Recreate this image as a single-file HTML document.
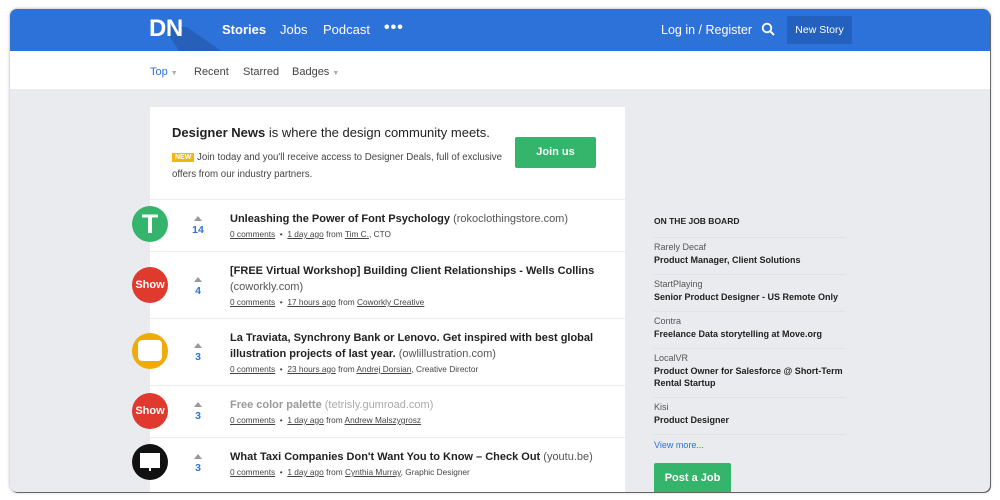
<!DOCTYPE html>
<html><head><meta charset="utf-8"><style>
*{margin:0;padding:0;box-sizing:border-box}
body{width:1000px;height:500px;background:#fff;font-family:"Liberation Sans",Arial,sans-serif;position:relative;overflow:hidden}
.win{position:absolute;left:10px;top:9px;width:980px;height:483px;border-radius:7px;overflow:hidden;background:#e9ebee;box-shadow:1px 1px 0 #666,0 0 3px rgba(0,0,0,.35)}
.hdr{position:absolute;left:0;top:0;width:980px;height:42px;background:#2d72d9}
.logo{position:absolute;left:139px;top:6px;color:#fff;font-weight:bold;font-size:24px;letter-spacing:-0.5px;z-index:2}
.nav{position:absolute;top:13px;color:#fff;font-size:13px}
.sub{position:absolute;left:0;top:42px;width:980px;height:38px;background:#fff}
.sub span{position:absolute;top:15px;font-size:11px;color:#444}
.card{position:absolute;left:140px;top:98px;width:475px;height:400px;background:#fff}
.row{position:absolute;left:0;width:475px;border-top:1px solid #ececec}
.av{position:absolute;left:-18px;width:36px;height:36px;border-radius:50%;color:#fff;font-weight:bold;font-size:11px;text-align:center;line-height:36px}
.vote{position:absolute;left:38px;width:20px;text-align:center;color:#2d72d9;font-weight:bold;font-size:10.5px}
.vote:before{content:"";display:block;margin:0 auto 3px;width:0;height:0;border-left:4px solid transparent;border-right:4px solid transparent;border-bottom:5px solid #999}
.t{position:absolute;left:80px;width:385px;font-size:11px;font-weight:bold;color:#222;line-height:16px}
.t i{font-style:normal;font-weight:normal;color:#555}
.m{font-size:8.3px;color:#444;font-weight:normal;line-height:14px}
.m u{color:#444}
.job{position:absolute;left:644px;width:192px;font-size:9px;color:#555;border-top:1px solid #e0e2e5;padding-top:4px}
.job b{display:block;color:#222;font-size:9px;margin-top:2px;line-height:12px}
</style></head><body>
<div class="win">
 <div class="hdr">
  <svg style="position:absolute;left:139px;top:0" width="80" height="42"><polygon points="15,18 38,18 72,42 30,42" fill="#2660b8"/></svg>
  <div class="logo">DN</div>
  <div class="nav" style="left:212px;font-weight:bold">Stories</div>
  <div class="nav" style="left:270px">Jobs</div>
  <div class="nav" style="left:313px">Podcast</div>
  <div class="nav" style="left:374px;top:10px;font-size:16px;letter-spacing:1px;font-weight:bold">•••</div>
  <div class="nav" style="left:651px;font-size:12.5px;top:14px">Log in / Register</div>
  <svg style="position:absolute;left:751px;top:13px" width="15" height="15"><circle cx="6" cy="6" r="4.3" stroke="#fff" stroke-width="1.8" fill="none"/><line x1="9.2" y1="9.2" x2="13" y2="13" stroke="#fff" stroke-width="2"/></svg>
  <div style="position:absolute;left:777px;top:7px;width:65px;height:28px;background:#2460bd;color:#fff;font-size:10.5px;text-align:center;line-height:28px">New Story</div>
 </div>
 <div class="sub">
  <span style="left:140px;color:#2d72d9">Top <small style="color:#aaa;font-size:7px">▼</small></span>
  <span style="left:184px">Recent</span>
  <span style="left:233px">Starred</span>
  <span style="left:282px">Badges <small style="color:#aaa;font-size:7px">▼</small></span>
 </div>
 <div class="card">
  <div style="position:absolute;left:22px;top:18px;font-size:13px;color:#222"><b>Designer News</b> is where the design community meets.</div>
  <div style="position:absolute;left:22px;top:43px;width:345px;font-size:9.7px;color:#444;line-height:16px"><span style="background:#f5b50d;color:#fff;font-size:7px;font-weight:bold;padding:1px 3px;position:relative;top:-1px">NEW</span> Join today and you'll receive access to Designer Deals, full of exclusive offers from our industry partners.</div>
  <div style="position:absolute;left:365px;top:30px;width:81px;height:31px;background:#35b46b;border-radius:2px;color:#fff;font-weight:bold;font-size:11px;text-align:center;line-height:31px">Join us</div>

  <div class="row" style="top:92px;height:52px">
   <div class="av" style="top:6px;background:#35b46b;font-size:27px">T</div>
   <div class="vote" style="top:16px">14</div>
   <div class="t" style="top:11px">Unleashing the Power of Font Psychology <i>(rokoclothingstore.com)</i><div class="m"><u>0 comments</u> &nbsp;•&nbsp; <u>1 day ago</u> from <u>Tim C.</u>, CTO</div></div>
  </div>
  <div class="row" style="top:144px;height:67px">
   <div class="av" style="top:15px;background:#e03a2e">Show</div>
   <div class="vote" style="top:25px">4</div>
   <div class="t" style="top:11px">[FREE Virtual Workshop] Building Client Relationships - Wells Collins <i>(coworkly.com)</i><div class="m"><u>0 comments</u> &nbsp;•&nbsp; <u>17 hours ago</u> from <u>Coworkly Creative</u></div></div>
  </div>
  <div class="row" style="top:211px;height:67px">
   <div class="av" style="top:14px;background:#f1aa0c"><div style="position:absolute;left:6px;top:7px;width:24px;height:21px;background:#fff;border-radius:4px"></div></div>
   <div class="vote" style="top:24px">3</div>
   <div class="t" style="top:11px">La Traviata, Synchrony Bank or Lenovo. Get inspired with best global illustration projects of last year. <i>(owlillustration.com)</i><div class="m"><u>0 comments</u> &nbsp;•&nbsp; <u>23 hours ago</u> from <u>Andrej Dorsian</u>, Creative Director</div></div>
  </div>
  <div class="row" style="top:278px;height:52px">
   <div class="av" style="top:7px;background:#e03a2e">Show</div>
   <div class="vote" style="top:16px">3</div>
   <div class="t" style="top:11px;color:#999">Free color palette <i style="color:#aaa">(tetrisly.gumroad.com)</i><div class="m"><u>0 comments</u> &nbsp;•&nbsp; <u>1 day ago</u> from <u>Andrew Malszygrosz</u></div></div>
  </div>
  <div class="row" style="top:330px;height:60px">
   <div class="av" style="top:6px;background:#111"><div style="position:absolute;left:8px;top:9px;width:20px;height:15px;background:#fff"></div><div style="position:absolute;left:17px;top:24px;width:2px;height:3px;background:#fff"></div></div>
   <div class="vote" style="top:16px">3</div>
   <div class="t" style="top:11px">What Taxi Companies Don't Want You to Know – Check Out <i>(youtu.be)</i><div class="m"><u>0 comments</u> &nbsp;•&nbsp; <u>1 day ago</u> from <u>Cynthia Murray</u>, Graphic Designer</div></div>
  </div>
 </div>

 <div style="position:absolute;left:644px;top:207px;font-size:8.5px;font-weight:bold;color:#222">ON THE JOB BOARD</div>
 <div class="job" style="top:228px">Rarely Decaf<b>Product Manager, Client Solutions</b></div>
 <div class="job" style="top:265px">StartPlaying<b>Senior Product Designer - US Remote Only</b></div>
 <div class="job" style="top:302px">Contra<b>Freelance Data storytelling at Move.org</b></div>
 <div class="job" style="top:339px">LocalVR<b>Product Owner for Salesforce @ Short-Term Rental Startup</b></div>
 <div class="job" style="top:388px">Kisi<b>Product Designer</b></div>
 <div class="job" style="top:425px;color:#2d72d9;padding-top:5px">View more...</div>
 <div style="position:absolute;left:644px;top:454px;width:77px;height:30px;background:#35b46b;border-radius:2px;color:#fff;font-weight:bold;font-size:11px;text-align:center;line-height:30px">Post a Job</div>
</div>
</body></html>
